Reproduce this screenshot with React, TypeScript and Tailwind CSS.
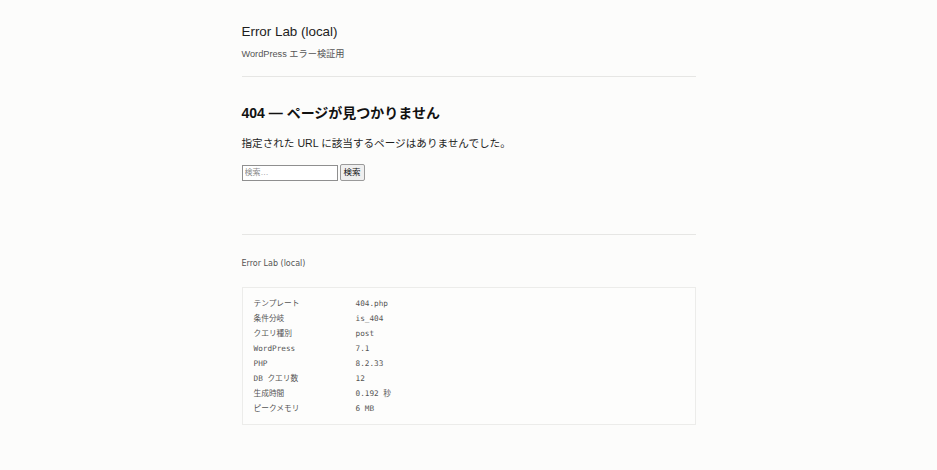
import React from 'react';

const sans = "font-['Liberation_Sans','Noto_Sans_CJK_JP',sans-serif]";

const debugRows: [string, string][] = [
  ['テンプレート', '404.php'],
  ['条件分岐', 'is_404'],
  ['クエリ種別', 'post'],
  ['WordPress', '7.1'],
  ['PHP', '8.2.33'],
  ['DB クエリ数', '12'],
  ['生成時間', '0.192 秒'],
  ['ピークメモリ', '6 MB'],
];

const App: React.FC = () => {
  return (
    <div className={`min-h-screen bg-[#fcfcfb] ${sans}`}>
      <div className="w-[454px] mx-auto">
        {/* Header */}
        <header className="pt-[22px] pb-[15px] border-b border-[#e6e6e4]">
          <div className="text-[13.4px] leading-[20px] text-[#1e1e1e]">Error Lab (local)</div>
          <div className="mt-[5px] text-[9.2px] leading-[14px] text-[#555]">WordPress エラー検証用</div>
        </header>

        {/* Content */}
        <main className="pt-[26px] pb-[53px] border-b border-[#e6e6e4]">
          <h1 className="text-[14px] leading-[20px] font-bold text-[#111]">404 — ページが見つかりません</h1>
          <p className="mt-[12px] text-[10.6px] leading-[16px] text-[#1e1e1e]">
            指定された URL に該当するページはありませんでした。
          </p>
          <form className="mt-[13px] flex items-center gap-[2px]" onSubmit={(e) => e.preventDefault()}>
            <input
              type="search"
              placeholder="検索…"
              className="w-[96px] h-[16px] px-[2px] border border-[#8f8f8f] bg-white text-[8px] placeholder:text-[#8a8a8a] outline-none"
            />
            <button
              type="submit"
              className="h-[17px] px-[3px] border border-[#9a9a9a] rounded-[2px] bg-[#efefef] text-[8.5px] text-[#111]"
            >
              検索
            </button>
          </form>
        </main>

        {/* Footer */}
        <footer className="pt-[23px] pb-[40px]">
          <div className="text-[8px] leading-[12px] text-[#555] font-['DejaVu_Sans','Noto_Sans_CJK_JP',sans-serif]">
            Error Lab (local)
          </div>
          <div className="mt-[17px] border border-[#ececea] bg-[#fdfdfc] px-[11px] py-[8px] font-['DejaVu_Sans_Mono','Noto_Sans_CJK_JP',monospace] text-[7.7px] leading-[15px] text-[#555]">
            {debugRows.map(([label, value]) => (
              <div key={label} className="flex">
                <div className="w-[102px] shrink-0">{label}</div>
                <div>{value}</div>
              </div>
            ))}
          </div>
        </footer>
      </div>
    </div>
  );
};

export default App;
